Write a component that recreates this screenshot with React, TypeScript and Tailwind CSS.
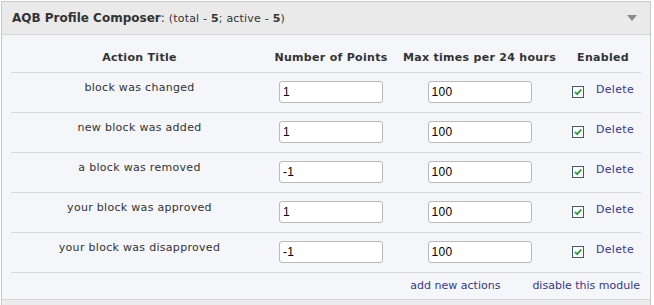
const rows = [
  { title: "block was changed", points: "1", max: "100" },
  { title: "new block was added", points: "1", max: "100" },
  { title: "a block was removed", points: "-1", max: "100" },
  { title: "your block was approved", points: "1", max: "100" },
  { title: "your block was disapproved", points: "-1", max: "100" },
];

const cols = "grid grid-cols-[257px_126px_171px_76px]";

function CheckBox() {
  return (
    <span className="inline-flex w-[12px] h-[12px] items-center justify-center border border-[#3b5a6e] bg-white">
      <svg width="10" height="10" viewBox="0 0 10 10">
        <path d="M2 5 L4.2 7.2 L8.2 2.6" fill="none" stroke="#2f9a35" strokeWidth="1.8" />
      </svg>
    </span>
  );
}

function ValueInput({ value }: { value: string }) {
  return (
    <input
      defaultValue={value}
      className="w-[104px] h-[22px] rounded-[3px] border border-[#b9b9b9] bg-white px-[3px] text-[12px] text-black outline-none [font-family:'Liberation_Sans',Arial,sans-serif]"
    />
  );
}

export default function App() {
  return (
    <div className="w-[654px] h-[305px] bg-white pt-[1px] pl-[1px] overflow-hidden text-[#333] [font-family:'DejaVu_Sans',Verdana,sans-serif]">
      <div className="w-[650px] h-[320px] flex flex-col border border-[#c9c9c9]">
        <div className="h-[33px] shrink-0 flex items-center justify-between bg-[#eaeaea] border-b border-[#d6d6d6] pl-[10px] pr-[13px]">
          <div className="flex items-baseline">
            <span className="text-[12px] font-bold">AQB Profile Composer</span>
            <span className="text-[12px]">:</span>
            <span className="text-[11px] ml-[4px] tracking-[0.2px]">
              (total - <b>5</b>; active - <b>5</b>)
            </span>
          </div>
          <svg width="10" height="6" viewBox="0 0 10 6">
            <path d="M0 0 H10 L5 6 Z" fill="#8a8a8a" />
          </svg>
        </div>

        <div className="bg-[#f4f6f9] px-[9px] h-[265px] shrink-0 border-b border-[#d6d6d6]">
          <div className={`${cols} h-[38px] border-b border-[#d9d9d9] text-[11px] font-bold items-start pt-[16px] leading-[14px] tracking-[0.3px]`}>
            <div className="text-center">Action Title</div>
            <div className="text-center">Number of Points</div>
            <div className="text-center">Max times per 24 hours</div>
            <div className="text-center">Enabled</div>
          </div>

          {rows.map((r) => (
            <div key={r.title} className={`${cols} h-[40px] border-b border-[#d9d9d9] text-[11px] items-start tracking-[0.3px]`}>
              <div className="text-center pt-[8px] leading-[14px]">{r.title}</div>
              <div className="flex justify-center pt-[8px]">
                <ValueInput value={r.points} />
              </div>
              <div className="flex justify-center pt-[8px]">
                <ValueInput value={r.max} />
              </div>
              <div className="flex items-start justify-center gap-[12px] pt-[10px]">
                <span className="mt-[3px] flex">
                  <CheckBox />
                </span>
                <a className="text-[#36368a] leading-[14px]">Delete</a>
              </div>
            </div>
          ))}

          <div className="flex justify-end gap-[32px] pr-[1px] pt-[5px] text-[11px] text-[#36368a]">
            <a>add new actions</a>
            <a>disable this module</a>
          </div>
        </div>

        <div className="flex-1 bg-[#ececec]" />
      </div>
    </div>
  );
}
